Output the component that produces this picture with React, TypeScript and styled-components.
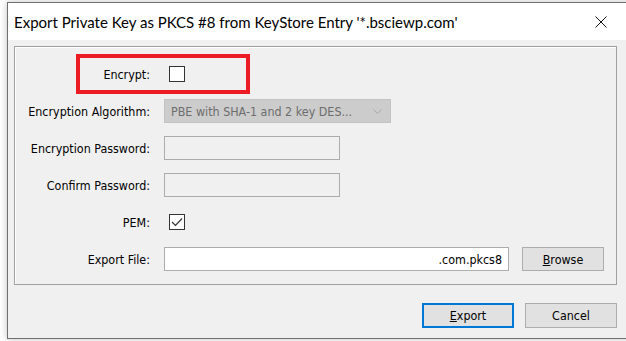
import styled, { createGlobalStyle } from "styled-components";

const Global = createGlobalStyle`
  html, body {
    margin: 0;
    padding: 0;
    background: #ffffff;
    overflow: hidden;
  }
`;

const Screen = styled.div`
  width: 626px;
  height: 341px;
  padding: 2px 0 0 7px;
  box-sizing: border-box;
  overflow: hidden;
`;

const Window = styled.div`
  width: 624px;
  height: 337px;
  box-sizing: border-box;
  border: 1px solid #6f6f6f;
  background: #f0f0f0;
  box-shadow: 0 0 7px rgba(0, 0, 0, 0.25);
  display: flex;
  flex-direction: column;
`;

const TitleBar = styled.div`
  height: 37px;
  background: #ffffff;
  display: flex;
  align-items: center;
  justify-content: space-between;
  padding: 0 0 0 6px;
  font-family: Lato, "Noto Sans", sans-serif;
  font-size: 15px;
  color: #000;
`;

const CloseBox = styled.div`
  width: 46px;
  height: 37px;
  display: flex;
  align-items: center;
  justify-content: center;
  margin-right: 6px;
`;

const Body = styled.div`
  padding: 6px 0 0 6px;
  display: flex;
  flex-direction: column;
  font-family: "DejaVu Sans Condensed", "DejaVu Sans", sans-serif;
  font-size: 12.4px;
  color: #000;
`;

const Panel = styled.div`
  position: relative;
  width: 603px;
  box-sizing: border-box;
  border: 1px solid #a0a0a0;
  box-shadow: inset 1px 1px 0 #ffffff;
  padding: 15px 0 13px 0;
  display: grid;
  grid-template-columns: 135px auto;
  grid-auto-rows: 24px;
  row-gap: 13px;
  column-gap: 14px;
  align-items: center;
`;

const Label = styled.div`
  text-align: right;
  white-space: nowrap;
`;

const FieldCell = styled.div`
  display: flex;
  align-items: center;
  gap: 13px;
`;

const Check = styled.div`
  width: 16px;
  height: 16px;
  box-sizing: border-box;
  border: 1px solid #333333;
  background: #ffffff;
  margin-left: 5px;
  display: flex;
  align-items: center;
  justify-content: center;
`;

const Combo = styled.div`
  width: 227px;
  height: 24px;
  box-sizing: border-box;
  border: 1px solid #c3c3c3;
  background: #cccccc;
  color: #6d6d6d;
  display: flex;
  align-items: center;
  justify-content: space-between;
  padding: 0 8px 0 6px;
`;

const Input = styled.div<{ $w: number; $disabled?: boolean }>`
  width: ${(p) => p.$w}px;
  height: 24px;
  box-sizing: border-box;
  border: 1px solid #adadad;
  background: ${(p) => (p.$disabled ? "#f0f0f0" : "#ffffff")};
  display: flex;
  align-items: center;
  justify-content: flex-end;
  padding: 0 6px;
`;

const Button = styled.div<{ $default?: boolean }>`
  width: 92px;
  height: 25px;
  box-sizing: border-box;
  border: ${(p) => (p.$default ? "2px solid #0078d7" : "1px solid #adadad")};
  background: #e1e1e1;
  display: flex;
  align-items: center;
  justify-content: center;
`;

const SmallButton = styled(Button)`
  width: 82px;
  height: 24px;
`;

const ButtonBar = styled.div`
  display: flex;
  justify-content: flex-end;
  gap: 11px;
  width: 603px;
  margin-top: 18px;
`;

const Highlight = styled.div`
  position: absolute;
  left: 61px;
  top: 7px;
  width: 174px;
  height: 40px;
  box-sizing: border-box;
  border: 4px solid #ed1c24;
  pointer-events: none;
`;

export default function App() {
  return (
    <>
      <Global />
      <Screen>
        <Window>
          <TitleBar>
            <span>Export Private Key as PKCS #8 from KeyStore Entry '*.bsciewp.com'</span>
            <CloseBox>
              <svg width="12" height="12" viewBox="0 0 12 12">
                <path d="M0.5 0.5 L11.5 11.5 M11.5 0.5 L0.5 11.5" stroke="#111" strokeWidth="1" />
              </svg>
            </CloseBox>
          </TitleBar>
          <Body>
            <Panel>
              <Label>Encrypt:</Label>
              <FieldCell>
                <Check />
              </FieldCell>

              <Label>Encryption Algorithm:</Label>
              <FieldCell>
                <Combo>
                  <span>PBE with SHA-1 and 2 key DES...</span>
                  <svg width="9" height="5" viewBox="0 0 9 5">
                    <path d="M0.5 0.5 L4.5 4.5 L8.5 0.5" stroke="#a8a8a8" fill="none" strokeWidth="1" />
                  </svg>
                </Combo>
              </FieldCell>

              <Label>Encryption Password:</Label>
              <FieldCell>
                <Input $w={176} $disabled />
              </FieldCell>

              <Label>Confirm Password:</Label>
              <FieldCell>
                <Input $w={176} $disabled />
              </FieldCell>

              <Label>PEM:</Label>
              <FieldCell>
                <Check>
                  <svg width="12" height="10" viewBox="0 0 12 10">
                    <path d="M1 5 L4.5 8.5 L11 1.5" stroke="#333" fill="none" strokeWidth="1.2" />
                  </svg>
                </Check>
              </FieldCell>

              <Label>Export File:</Label>
              <FieldCell>
                <Input $w={345}>.com.pkcs8</Input>
                <SmallButton>
                  <span>
                    <u>B</u>rowse
                  </span>
                </SmallButton>
              </FieldCell>

              <Highlight />
            </Panel>
            <ButtonBar>
              <Button $default>
                <span>
                  <u>E</u>xport
                </span>
              </Button>
              <Button>Cancel</Button>
            </ButtonBar>
          </Body>
        </Window>
      </Screen>
    </>
  );
}
